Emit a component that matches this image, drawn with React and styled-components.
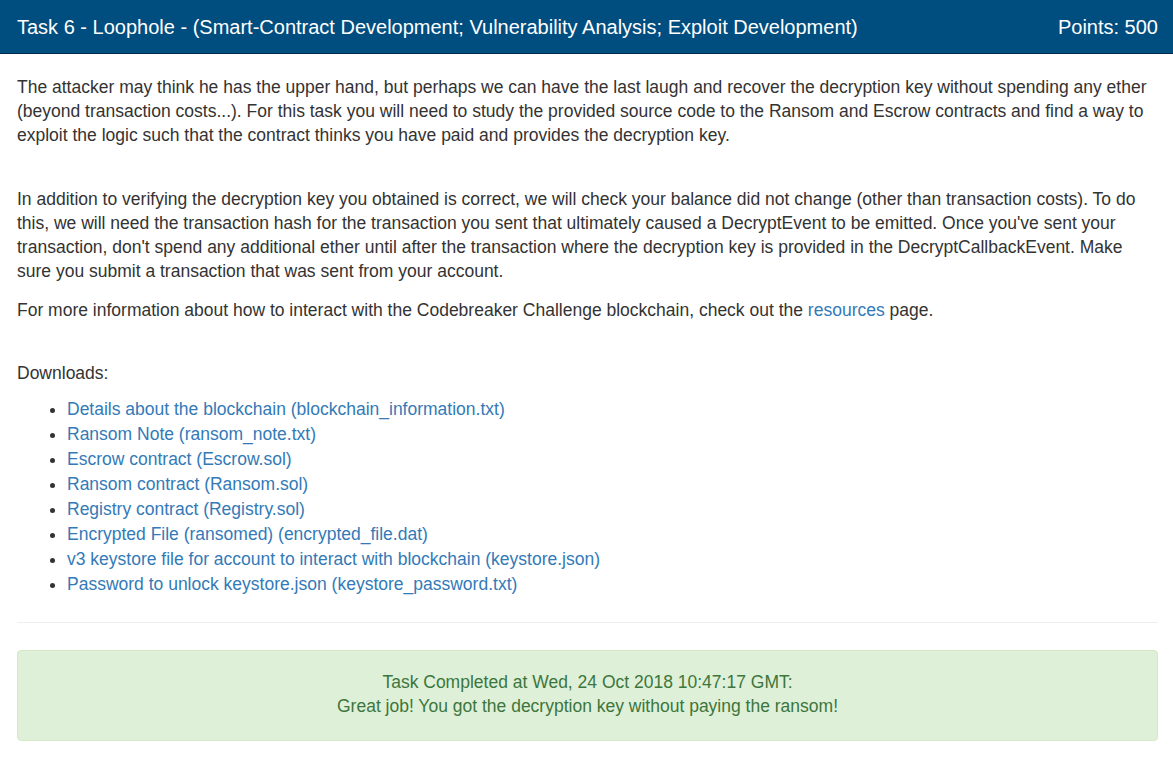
import React from "react";
import styled, { createGlobalStyle } from "styled-components";

const Global = createGlobalStyle`
  html, body { margin: 0; padding: 0; background: #fff; }
  body {
    font-family: "Liberation Sans", Arial, Helvetica, sans-serif;
    font-size: 17.5px;
    line-height: 1.5;
    color: #333;
  }
  * { box-sizing: border-box; }
`;

const Panel = styled.section`
  width: 1173px;
  background: #fff;
`;

const Header = styled.header`
  display: flex;
  justify-content: space-between;
  align-items: center;
  height: 54px;
  padding: 0 15px 0 17px;
  background: #004d7f;
  border-bottom: 1px solid #002b47;
  color: #fff;
  font-size: 20px;
`;

const Body = styled.div`
  padding: 21px 15px 40px 17px;
`;

const P = styled.p`
  margin: 0 0 ${(p) => p.$mb || 15}px;
  line-height: 24px;
`;

const Link = styled.a`
  color: #337ab7;
  text-decoration: none;
`;

const List = styled.ul`
  margin: 0;
  padding-left: 50px;
  line-height: 25px;
`;

const Item = styled.li`
  color: #333;
`;

const Rule = styled.hr`
  margin: 25px 0 27px;
  border: 0;
  border-top: 1px solid #eee;
`;

const Alert = styled.div`
  padding: 19px 15px 22px;
  background: #dff0d8;
  border: 1px solid #d6e9c6;
  border-radius: 4px;
  color: #3c763d;
  text-align: center;
  line-height: 24px;
`;

const downloads = [
  "Details about the blockchain (blockchain_information.txt)",
  "Ransom Note (ransom_note.txt)",
  "Escrow contract (Escrow.sol)",
  "Ransom contract (Ransom.sol)",
  "Registry contract (Registry.sol)",
  "Encrypted File (ransomed) (encrypted_file.dat)",
  "v3 keystore file for account to interact with blockchain (keystore.json)",
  "Password to unlock keystore.json (keystore_password.txt)",
];

export default function App() {
  return (
    <>
      <Global />
      <Panel>
        <Header>
          <span>
            Task 6 - Loophole - (Smart-Contract Development; Vulnerability
            Analysis; Exploit Development)
          </span>
          <span>Points: 500</span>
        </Header>
        <Body>
          <P $mb={40}>
            The attacker may think he has the upper hand, but perhaps we can
            have the last laugh and recover the decryption key without spending
            any ether (beyond transaction costs...). For this task you will need
            to study the provided source code to the Ransom and Escrow contracts
            and find a way to exploit the logic such that the contract thinks
            you have paid and provides the decryption key.
          </P>
          <P>
            In addition to verifying the decryption key you obtained is correct,
            we will check your balance did not change (other than transaction
            costs). To do this, we will need the transaction hash for the
            transaction you sent that ultimately caused a DecryptEvent to be
            emitted. Once you've sent your transaction, don't spend any
            additional ether until after the transaction where the decryption
            key is provided in the DecryptCallbackEvent. Make sure you submit a
            transaction that was sent from your account.
          </P>
          <P $mb={39}>
            For more information about how to interact with the Codebreaker
            Challenge blockchain, check out the <Link href="#">resources</Link>{" "}
            page.
          </P>
          <P $mb={12}>Downloads:</P>
          <List>
            {downloads.map((d) => (
              <Item key={d}>
                <Link href="#">{d}</Link>
              </Item>
            ))}
          </List>
          <Rule />
          <Alert>
            Task Completed at Wed, 24 Oct 2018 10:47:17 GMT:
            <br />
            Great job! You got the decryption key without paying the ransom!
          </Alert>
        </Body>
      </Panel>
    </>
  );
}
